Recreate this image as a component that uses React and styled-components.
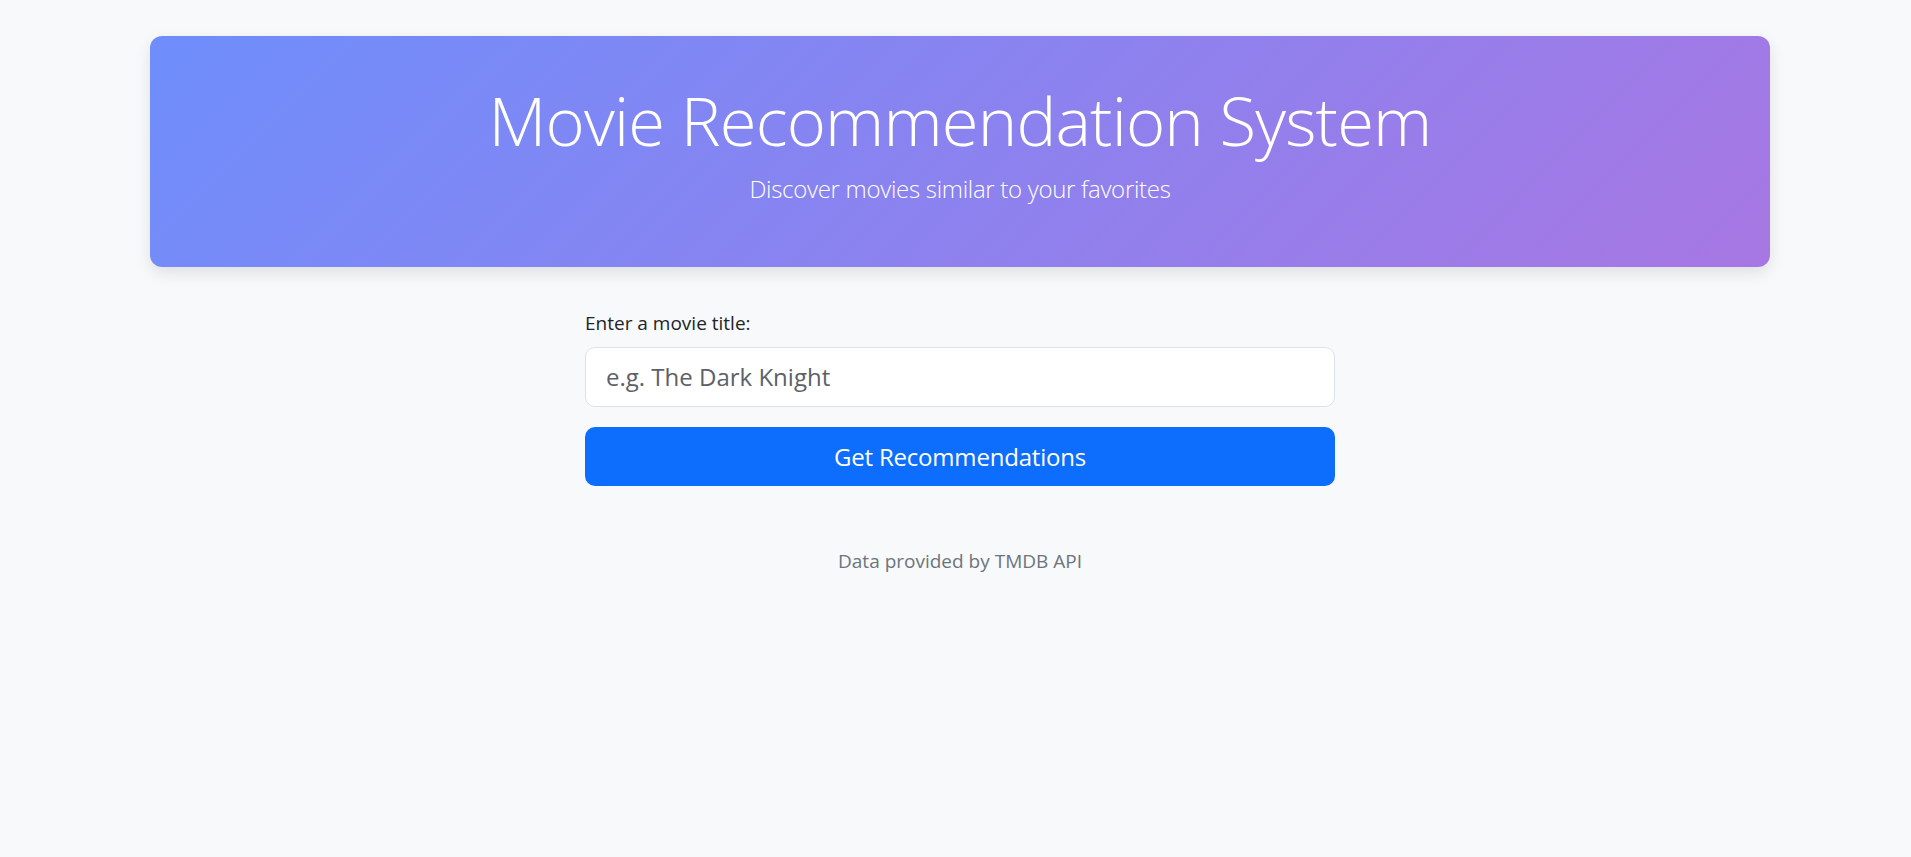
import React, { useState } from 'react'
import styled, { createGlobalStyle } from 'styled-components'

const GlobalStyle = createGlobalStyle`
  * { box-sizing: border-box; }
  html, body {
    margin: 0;
    padding: 0;
    background: #f8f9fa;
    font-family: "Open Sans", "Noto Sans", sans-serif;
    color: #212529;
  }
`

const Page = styled.div`
  min-height: 857px;
  padding: 36px 0 0 9px;
`

const Container = styled.div`
  max-width: 1620px;
  margin: 0 auto;
`

const Hero = styled.header`
  background: linear-gradient(135deg, #6e8efb, #a777e3);
  border-radius: 12px;
  box-shadow: 0 6px 16px rgba(0, 0, 0, 0.1);
  color: #fff;
  text-align: center;
  padding: 42px 20px 59px;
`

const Title = styled.h1`
  margin: 0;
  font-size: 67px;
  line-height: 84px;
  font-weight: 300;
  letter-spacing: -0.85px;
`

const Lead = styled.p`
  margin: 8px 0 0;
  font-size: 24px;
  line-height: 37.5px;
  font-weight: 300;
  letter-spacing: -0.3px;
`

const Form = styled.form`
  width: 750px;
  margin: 41px auto 0;
  display: flex;
  flex-direction: column;
`

const Label = styled.label`
  font-size: 19px;
  line-height: 30px;
  margin-bottom: 9px;
`

const Input = styled.input`
  height: 60px;
  border: 1px solid #dee2e6;
  border-radius: 10px;
  background: #fff;
  padding: 0 20px;
  font-family: inherit;
  font-size: 24px;
  color: #212529;
  outline: none;
  &::placeholder { color: #5d6166; }
`

const Button = styled.button`
  margin-top: 20px;
  height: 59px;
  border: 0;
  border-radius: 10px;
  background: #0d6efd;
  color: #fff;
  font-family: inherit;
  font-size: 24px;
  letter-spacing: -0.2px;
  cursor: pointer;
`

const Footer = styled.p`
  margin: 60px 0 0;
  text-align: center;
  font-size: 19px;
  line-height: 30px;
  color: #6c757d;
`

export default function App() {
  const [title, setTitle] = useState('')
  return (
    <>
      <GlobalStyle />
      <Page>
        <Container>
          <Hero>
            <Title>Movie Recommendation System</Title>
            <Lead>Discover movies similar to your favorites</Lead>
          </Hero>
          <Form onSubmit={e => e.preventDefault()}>
            <Label htmlFor="movie">Enter a movie title:</Label>
            <Input
              id="movie"
              value={title}
              onChange={e => setTitle(e.target.value)}
              placeholder="e.g. The Dark Knight"
            />
            <Button type="submit">Get Recommendations</Button>
          </Form>
          <Footer>Data provided by TMDB API</Footer>
        </Container>
      </Page>
    </>
  )
}
